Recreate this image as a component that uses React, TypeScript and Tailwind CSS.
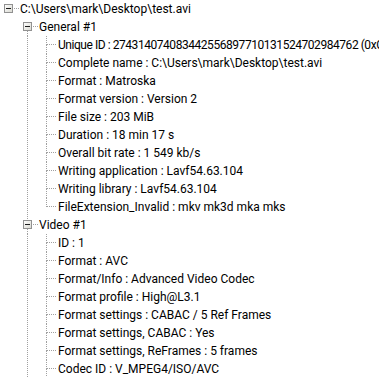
type Row = {
  level: number;
  text: string;
  box?: boolean;
  tight?: boolean;
  guides: boolean[]; // vertical line continuing at each ancestor column
  up?: boolean; // line from top of cell to centre
  down?: boolean; // line from centre to bottom of cell
};

const rows: Row[] = [
  { level: 0, text: 'C:\\Users\\mark\\Desktop\\test.avi', box: true, guides: [] },
  { level: 1, text: 'General #1', box: true, guides: [false], down: true },
  { level: 2, text: 'Unique ID : 274314074083442556897710131524702984762 (0xCE5D4C3A1B2F6E08E4D1A9C7B3F20A12)', tight: true, guides: [false, true], up: true, down: true },
  { level: 2, text: 'Complete name : C:\\Users\\mark\\Desktop\\test.avi', guides: [false, true], up: true, down: true },
  { level: 2, text: 'Format : Matroska', guides: [false, true], up: true, down: true },
  { level: 2, text: 'Format version : Version 2', guides: [false, true], up: true, down: true },
  { level: 2, text: 'File size : 203 MiB', guides: [false, true], up: true, down: true },
  { level: 2, text: 'Duration : 18 min 17 s', guides: [false, true], up: true, down: true },
  { level: 2, text: 'Overall bit rate : 1 549 kb/s', guides: [false, true], up: true, down: true },
  { level: 2, text: 'Writing application : Lavf54.63.104', guides: [false, true], up: true, down: true },
  { level: 2, text: 'Writing library : Lavf54.63.104', guides: [false, true], up: true, down: true },
  { level: 2, text: 'FileExtension_Invalid : mkv mk3d mka mks', guides: [false, true], up: true },
  { level: 1, text: 'Video #1', box: true, guides: [false], up: true, down: true },
  { level: 2, text: 'ID : 1', guides: [false, true], up: true, down: true },
  { level: 2, text: 'Format : AVC', guides: [false, true], up: true, down: true },
  { level: 2, text: 'Format/Info : Advanced Video Codec', guides: [false, true], up: true, down: true },
  { level: 2, text: 'Format profile : High@L3.1', guides: [false, true], up: true, down: true },
  { level: 2, text: 'Format settings : CABAC / 5 Ref Frames', guides: [false, true], up: true, down: true },
  { level: 2, text: 'Format settings, CABAC : Yes', guides: [false, true], up: true, down: true },
  { level: 2, text: 'Format settings, ReFrames : 5 frames', guides: [false, true], up: true, down: true },
  { level: 2, text: 'Codec ID : V_MPEG4/ISO/AVC', guides: [false, true], up: true, down: true },
];

const DOT = '#a0a0a0';

function Guide({ on }: { on: boolean }) {
  return (
    <svg width="19" height="18" className="shrink-0" shapeRendering="crispEdges">
      {on && <line x1="8.5" y1="0" x2="8.5" y2="18" stroke={DOT} strokeDasharray="1 1" />}
    </svg>
  );
}

function Connector({ row }: { row: Row }) {
  return (
    <svg width="19" height="18" className="shrink-0" shapeRendering="crispEdges">
      <defs>
        <linearGradient id="boxfill" x1="0" y1="0" x2="1" y2="1">
          <stop offset="0" stopColor="#ffffff" />
          <stop offset="1" stopColor="#d8d8d0" />
        </linearGradient>
      </defs>
      {row.up && <line x1="8.5" y1="0" x2="8.5" y2={row.box ? 4 : 9} stroke={DOT} strokeDasharray="1 1" />}
      {row.down && <line x1="8.5" y1={row.box ? 13 : 9} x2="8.5" y2="18" stroke={DOT} strokeDasharray="1 1" />}
      {row.box ? (
        <>
          <line x1="14" y1="8.5" x2="19" y2="8.5" stroke={DOT} strokeDasharray="1 1" />
          <rect x="4.5" y="4.5" width="8" height="8" fill="url(#boxfill)" stroke="#919191" />
          <line x1="6" y1="8.5" x2="11" y2="8.5" stroke="#1c1c1c" />
        </>
      ) : (
        <line x1="9" y1="8.5" x2="19" y2="8.5" stroke={DOT} strokeDasharray="1 1" />
      )}
    </svg>
  );
}

export default function App() {
  return (
    <div className="w-[379px] h-[377px] overflow-hidden bg-white font-[Roboto,sans-serif] text-[12px] text-black">
      {rows.map((row, i) => (
        <div key={i} className="flex h-[18px] items-center whitespace-nowrap">
          {row.guides.map((g, j) => (
            <Guide key={j} on={g} />
          ))}
          <Connector row={row} />
          <span className={row.tight ? 'pl-px leading-[18px] tracking-[-0.45px]' : 'pl-px leading-[18px]'}>{row.text}</span>
        </div>
      ))}
    </div>
  );
}
